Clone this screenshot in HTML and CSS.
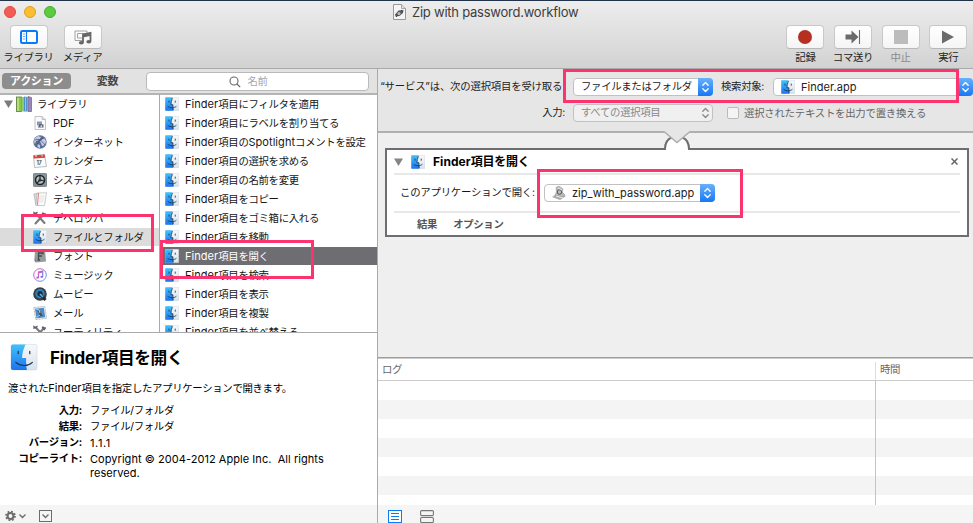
FILE: index.html
```html
<!DOCTYPE html>
<html lang="ja">
<head>
<meta charset="utf-8">
<title>Zip with password.workflow</title>
<link rel="stylesheet" href="styles.css">
</head>
<body>
<svg class="defs" width="0" height="0">
  <defs>
    <linearGradient id="gBlue" x1="0" y1="0" x2="0" y2="1"><stop offset="0" stop-color="#42c1fb"/><stop offset="1" stop-color="#1d74ee"/></linearGradient>
    <linearGradient id="gPale" x1="0" y1="0" x2="0" y2="1"><stop offset="0" stop-color="#f7f9fb"/><stop offset="1" stop-color="#d9e1ea"/></linearGradient>
    <linearGradient id="gNote" x1="0" y1="0" x2="1" y2="1"><stop offset="0" stop-color="#f257a5"/><stop offset=".5" stop-color="#a568e8"/><stop offset="1" stop-color="#35b5f2"/></linearGradient>
    <symbol id="finder" viewBox="0 0 28 28">
      <rect x=".5" y=".5" width="27" height="27" rx="1.5" fill="url(#gPale)" stroke="#b9c4d0" stroke-width=".7"/>
      <path d="M2 .5h13c-2 5-3 9-3.300 15h4c-.2 5 .1 8 .9 12H2Q.5 27.500.5 26V2Q.5.5 2 .5Z" fill="url(#gBlue)"/>
      <path d="M14.500 3c-1.600 4-2.400 8-2.700 12.500h4c-.2 4 0 7 .6 10M6 19c5 3.600 11.500 3.600 16.200 0M8 8v2.500M20.500 8v2.500" fill="none" stroke="#17344f" stroke-width="1.700" stroke-linecap="round"/>
    </symbol>
    <symbol id="finder-lg" viewBox="0 0 28 28">
      <rect x=".5" y=".5" width="27" height="26.500" rx="2" fill="url(#gPale)" stroke="#c7d0d9" stroke-width=".5"/>
      <path d="M2.500.5H15.500c-2.200 5-3.300 9-3.600 14h4.300c-.2 5 .1 9 .9 12.500H2.500Q.5 27 .5 25V2.500Q.5.5 2.500.5Z" fill="url(#gBlue)"/>
      <path d="M5.500 19c5 4.400 12.500 4.400 17.200 0M8 7.500v2.500M20 7.500v2.500" fill="none" stroke="#17344f" stroke-width="1.200" stroke-linecap="round"/>
    </symbol>
    <symbol id="updown" viewBox="0 0 15 18"><path d="M4.800 7.300 7.500 4.500l2.700 2.800M4.800 10.700l2.700 2.800 2.700-2.800" fill="none" stroke="currentColor" stroke-width="1.300" stroke-linecap="round" stroke-linejoin="round"/></symbol>
    <symbol id="tools" viewBox="0 0 14 14"><path d="M2.500 12.500 11 3M2.800 2.500 11.500 12" stroke="#777b80" stroke-width="2.100" stroke-linecap="round"/><path d="M1 4V1.500l1.500 1.200L4.500 1M9.500 1.500l1.500 1.700L13 3M9 2.300 12 5" fill="none" stroke="#5c6168" stroke-width="1.300"/></symbol>
  </defs>
</svg>
<div class="window">
  <header class="toolbar">
    <div class="lights"><i class="red"></i><i class="yellow"></i><i class="green"></i></div>
    <div class="title">
      <svg width="13" height="16" viewBox="0 0 13 16"><path d="M.5.500h8l4 4v11H.5Z" fill="#f4f4f4" stroke="#999"/><path d="M8.500.5v4h4" fill="#ddd" stroke="#999" stroke-width=".8"/><path d="M2 10.500 5.500 6.500l5-.5-.5 3-3.500 3-4 .5Z" fill="#59595b"/><circle cx="6" cy="9.500" r="1.500" fill="#bbb"/><path d="m3 13 2-2M8 6l2 2" stroke="#444"/></svg>
      <span>Zip with password.workflow</span>
    </div>
    <div class="tools left-tools">
      <div class="tool"><div class="btn"><svg width="18" height="14" viewBox="0 0 18 14"><rect x="1" y="1" width="16" height="12" rx="1.500" fill="#fff" stroke="#087cf5" stroke-width="2"/><path d="M6.500 1v12" stroke="#087cf5" stroke-width="1.200"/><path d="M3 4h2M3 6.500h2M3 9h2" stroke="#6bb0f8" stroke-width="1"/></svg></div><label>ライブラリ</label></div>
      <div class="tool"><div class="btn"><svg width="18" height="15" viewBox="0 0 18 15"><path d="M8 10.500H1V1h12v3M8 8H3.500V3.500h7" fill="none" stroke="#a2a2a2"/><path d="M9 12.500V4.500l7.500-1.700v8.500M9 6.500l7.500-1.700" fill="none" stroke="#666" stroke-width="1.800"/><ellipse cx="7.300" cy="12.700" rx="2.500" ry="1.800" fill="#666"/><ellipse cx="14.800" cy="11.700" rx="2.500" ry="1.800" fill="#666"/></svg></div><label>メディア</label></div>
    </div>
    <div class="tools right-tools">
      <div class="tool"><div class="btn"><svg width="16" height="16"><circle cx="8" cy="8" r="7" fill="#b53022"/></svg></div><label>記録</label></div>
      <div class="tool"><div class="btn"><svg width="16" height="14" viewBox="0 0 16 14"><path d="M.5 4.500h6V.500l7 6.500-7 6.500v-4h-6Z" fill="#6b6b6b"/><path d="M14.500 0v14" stroke="#6b6b6b" stroke-width="1.100"/></svg></div><label>コマ送り</label></div>
      <div class="tool off"><div class="btn"><svg width="14" height="14"><rect width="14" height="14" fill="#bcbcbc"/></svg></div><label>中止</label></div>
      <div class="tool"><div class="btn"><svg width="12" height="14"><path d="M0 .5 12 7 0 13.500Z" fill="#6b6b6b"/></svg></div><label>実行</label></div>
    </div>
  </header>
  <div class="main">
    <aside class="side">
      <div class="tabs">
        <span class="tab active">アクション</span><span class="tab">変数</span>
        <div class="search"><svg width="12" height="12" viewBox="0 0 12 12"><circle cx="5" cy="5" r="4" fill="none" stroke="#666" stroke-width="1.100"/><path d="m8 8 3.200 3.200" stroke="#666" stroke-width="1.200"/></svg><span>名前</span></div>
      </div>
      <div class="lists">
        <div class="library">
          <div class="row root"><svg class="tri" width="9" height="8"><path d="M0 .5h9L4.500 8Z" fill="#7b7b7b"/></svg><svg width="16" height="16" viewBox="0 0 16 16"><rect x=".4" y="1" width="5" height="14.500" fill="#8ec54d" stroke="#557c32" stroke-width=".8"/><path d="M2 1.500V15" stroke="#cde9a2" stroke-width="1.200"/><rect x="5.500" y="1" width="2.500" height="14.500" fill="#8fca6c"/><path d="m8 .5 3.500.5v14.500H8Z" fill="#4d91c5"/><path d="M9.500 1v14" stroke="#91c8ea"/><path d="m12 .5 3.500 1v14H12Z" fill="#9a86b8" stroke="#6c5e8d" stroke-width=".7"/></svg><span>ライブラリ</span></div>
          <div class="row"><svg class="ico" viewBox="0 0 14 14"><path d="M2 .500h7l3.500 3v10H2Z" fill="#fafafa" stroke="#aaa" stroke-width=".7"/><path d="M9 .5v3h3.500" fill="#ddd" stroke="#aaa" stroke-width=".6"/><rect x="4" y="5.500" width="5" height="4" fill="#849bc5"/><path d="M5 11.500 6.500 8l4 .5v3Z" fill="#596071"/><circle cx="8.300" cy="10.200" r="1" fill="#ddd"/></svg><span class="en">PDF</span></div>
          <div class="row"><svg class="ico" viewBox="0 0 14 14"><circle cx="7" cy="7" r="6.700" fill="#5c6f9b"/><path d="m2 3 3-2 3 1-2 3-3 1-1 3-1-2ZM7 6l4-3 2 3-1 4-3 1ZM4 9l3 1v3l-3-1Z" fill="#c3cce0"/><path d="M2 5c4-2 7 1 10 5M4 12c0-5 3-8 7-9" fill="none" stroke="#374361" stroke-width=".7"/></svg><span>インターネット</span></div>
          <div class="row"><svg class="ico" viewBox="0 0 14 14"><path d="m.5 1.500 11-1 2 12-12 1Z" fill="#fafafa" stroke="#a4a4a4" stroke-width=".7"/><path d="m.4 1.400 11.200-1 .5 3.400L.8 4.600Z" fill="#d94238"/><path d="M3 1v2M9 .5v2" stroke="#eee"/><text x="3.600" y="11" class="cal">17</text></svg><span>カレンダー</span></div>
          <div class="row"><svg class="ico" viewBox="0 0 14 14"><rect x=".4" y=".4" width="13.200" height="13.200" rx="1" fill="#87959a" stroke="#59656a" stroke-width=".7"/><circle cx="7" cy="7" r="4.500" fill="#b9c0c2" stroke="#20272a" stroke-width="1.600"/><path d="M7 7V3M7 7l4 1M7 7l-3 3" stroke="#20272a" stroke-width="1.200"/><circle cx="7" cy="7" r="1.600" fill="#30383b"/></svg><span>システム</span></div>
          <div class="row"><svg class="ico" viewBox="0 0 14 14"><path d="m.8 2 4-.8 1 12-3-.2Z" fill="#d8dbdc" stroke="#999" stroke-width=".5"/><path d="m4 1 9.500-.2-2 12.700H3Z" fill="#fcfcfc" stroke="#aaa" stroke-width=".6"/><path d="M5.500 1 4.500 13" stroke="#d75752" stroke-width=".8"/><path d="M6.500 4h5M6.300 6h5M6 8h5M6 10h4" stroke="#ccc" stroke-width=".6"/></svg><span>テキスト</span></div>
          <div class="row"><svg class="ico"><use href="#tools"/></svg><span>デベロッパ</span></div>
          <div class="row sel"><svg class="ico"><use href="#finder"/></svg><span>ファイルとフォルダ</span></div>
          <div class="row"><svg class="ico" viewBox="0 0 14 14"><path d="m2 1 10-.5 1 12-10 1Z" fill="#969c9a"/><path d="m2 1 1 12.500L1.500 12Z" fill="#636967"/><path d="M5.500 11V4H10v1.500M5.500 7H9M4.500 11h2.500" stroke="#424a48" stroke-width="1.300" fill="none"/></svg><span>フォント</span></div>
          <div class="row"><svg class="ico" viewBox="0 0 14 14"><circle cx="7" cy="7" r="6.300" fill="#fff" stroke="url(#gNote)" stroke-width="1"/><path d="M5.500 9.500V4l4.200-1v5.500M5.500 5l4.200-1" stroke="url(#gNote)" stroke-width="1.200" fill="none"/><ellipse cx="4.600" cy="9.700" rx="1.400" ry="1.100" fill="#e45bb1"/><ellipse cx="8.800" cy="8.800" rx="1.400" ry="1.100" fill="#8368e6"/></svg><span>ミュージック</span></div>
          <div class="row"><svg class="ico" viewBox="0 0 14 14"><circle cx="7" cy="7" r="6.800" fill="#3b4048"/><circle cx="7" cy="6.700" r="3.700" fill="#163247" stroke="#2f83bd" stroke-width="2"/><path d="m7.500 7.500 5 5.500" stroke="#252a30" stroke-width="3"/><path d="m7 7 3 3" stroke="#68bce7" stroke-width="1.400"/></svg><span>ムービー</span></div>
          <div class="row"><svg class="ico" viewBox="0 0 14 14"><path d="m.7 1.500 11-1.200 2 12-11 1.300Z" fill="#e9eef2" stroke="#9baab7" stroke-width=".8" stroke-dasharray="1 .5"/><path d="m2 2.700 8.800-.9 1.400 9.400-8.700 1Z" fill="#4d8bc1"/><path d="m4 4 3 1.200 3 5-2-.7-1.500 1.500L6 7Z" fill="#54483d"/><path d="m3 3 3 1 1 3M4 11l3-2" fill="none" stroke="#a9cbe8"/></svg><span>メール</span></div>
          <div class="row"><svg class="ico"><use href="#tools"/></svg><span>ユーティリティ</span></div>
        </div>
        <div class="actions">
          <div class="row"><svg class="ico"><use href="#finder"/></svg><span><b class="en">Finder</b>項目にフィルタを適用</span></div>
          <div class="row"><svg class="ico"><use href="#finder"/></svg><span><b class="en">Finder</b>項目にラベルを割り当てる</span></div>
          <div class="row"><svg class="ico"><use href="#finder"/></svg><span><b class="en">Finder</b>項目の<b class="en">Spotlight</b>コメントを設定</span></div>
          <div class="row"><svg class="ico"><use href="#finder"/></svg><span><b class="en">Finder</b>項目の選択を求める</span></div>
          <div class="row"><svg class="ico"><use href="#finder"/></svg><span><b class="en">Finder</b>項目の名前を変更</span></div>
          <div class="row"><svg class="ico"><use href="#finder"/></svg><span><b class="en">Finder</b>項目をコピー</span></div>
          <div class="row"><svg class="ico"><use href="#finder"/></svg><span><b class="en">Finder</b>項目をゴミ箱に入れる</span></div>
          <div class="row"><svg class="ico"><use href="#finder"/></svg><span><b class="en">Finder</b>項目を移動</span></div>
          <div class="row sel"><svg class="ico"><use href="#finder"/></svg><span><b class="en">Finder</b>項目を開く</span></div>
          <div class="row"><svg class="ico"><use href="#finder"/></svg><span><b class="en">Finder</b>項目を検索</span></div>
          <div class="row"><svg class="ico"><use href="#finder"/></svg><span><b class="en">Finder</b>項目を表示</span></div>
          <div class="row"><svg class="ico"><use href="#finder"/></svg><span><b class="en">Finder</b>項目を複製</span></div>
          <div class="row"><svg class="ico"><use href="#finder"/></svg><span><b class="en">Finder</b>項目を並べ替える</span></div>
        </div>
      </div>
      <section class="info">
        <div class="info-head"><svg width="28" height="27"><use href="#finder-lg"/></svg><h1><span class="en">Finder</span>項目を開く</h1></div>
        <p>渡された<b class="en">Finder</b>項目を指定したアプリケーションで開きます。</p>
        <dl>
          <dt>入力:</dt><dd>ファイル/フォルダ</dd>
          <dt>結果:</dt><dd>ファイル/フォルダ</dd>
          <dt>バージョン:</dt><dd class="en ver">1.1.1</dd>
          <dt>コピーライト:</dt><dd class="en">Copyright © 2004-2012 Apple Inc.&nbsp; All rights<br>reserved.</dd>
        </dl>
      </section>
      <footer class="foot side-foot">
        <svg width="22" height="12" viewBox="0 0 22 12"><circle cx="5.500" cy="6" r="2.900" fill="none" stroke="#6c6c6c" stroke-width="2"/><circle cx="5.500" cy="6" r="4.500" fill="none" stroke="#6c6c6c" stroke-width="1.700" stroke-dasharray="1.770 1.765"/><path d="m14.500 4.500 3 3 3-3" fill="none" stroke="#6c6c6c" stroke-width="1.400"/></svg>
        <svg width="13" height="12" viewBox="0 0 13 12"><rect x=".5" y=".5" width="12" height="11" fill="none" stroke="#6c6c6c"/><path d="m3.500 4.500 3 3 3-3" fill="none" stroke="#6c6c6c" stroke-width="1.300"/></svg>
      </footer>
    </aside>
    <section class="work">
      <div class="params">
        <div class="line">
          <span class="lab service">“サービス”は、次の選択項目を受け取る:</span>
          <div class="popup p-files"><span>ファイルまたはフォルダ</span><svg class="cap" width="15" height="18"><use href="#updown"/></svg></div>
          <span class="target">検索対象:</span>
          <div class="popup p-finder"><svg class="ico"><use href="#finder"/></svg><span class="en">Finder.app</span><svg class="cap" width="15" height="18"><use href="#updown"/></svg></div>
        </div>
        <div class="line second">
          <span class="lab">入力:</span>
          <div class="popup p-all"><span>すべての選択項目</span><svg class="cap" width="15" height="18"><use href="#updown"/></svg></div>
          <i class="check"></i><span class="replace">選択されたテキストを出力で置き換える</span>
        </div>
      </div>
      <div class="canvas">
        <div class="action">
          <div class="a-head"><svg width="9" height="8"><path d="M0 .5h9L4.500 8Z" fill="#858585"/></svg><svg class="ico"><use href="#finder"/></svg><h2><span class="en">Finder</span>項目を開く</h2><svg class="close" width="7" height="7"><path d="m.5.500 6 6M6.500.5l-6 6" stroke="#666" stroke-width="1.500"/></svg></div>
          <div class="a-body"><span class="open-label">このアプリケーションで開く:</span><div class="popup p-zip"><svg class="ico" viewBox="0 0 14 14"><path d="m0 11 6-4 8 3-6 4Z" fill="#a9a9a9"/><path d="M4 1.500 7 0l4 3-1 3 3 3-3 2-7-2 1.500-3Z" fill="#bbb" stroke="#999" stroke-width=".6"/><circle cx="7.500" cy="6" r="2.300" fill="#bbb" stroke="#555"/><path d="m6 2 4 2M4 10l7 2" stroke="#eee"/></svg><span class="en">zip_with_password.app</span><svg class="cap" width="15" height="18"><use href="#updown"/></svg></div></div>
          <div class="a-foot"><span>結果</span><span>オプション</span></div>
        </div>
        <svg class="joint" width="30" height="22" viewBox="0 0 30 22"><path d="M2 20.500C2 12 7 7.500 15 7.500S28 12 28 20.500V22H2Z" fill="#fff"/><path d="M0 18h3C3 12 6 8 9.500 6.500M30 18h-3C27 12 24 8 20.500 6.500" fill="none" stroke="#6e6d72" stroke-width="2"/><path d="M2 0h26v1.500h-.5L15 11.500 2.500 1.500H2Z" fill="#e6e6e6"/><path d="M0 1h2.500L15 11.500 27.500 1H30" fill="none" stroke="#adadad" stroke-width="1.400"/></svg>
      </div>
      <div class="log">
        <div class="log-head"><span>ログ</span><span>時間</span></div>
        <div class="log-body"><div></div><div></div></div>
      </div>
      <footer class="foot work-foot">
        <svg width="14" height="13" viewBox="0 0 14 13"><rect x=".5" y=".5" width="13" height="12" fill="#fff" stroke="#087cf5"/><path d="M3 3.500h8M3 6.500h8M3 9.500h8" stroke="#087cf5"/></svg>
        <svg width="14" height="13" viewBox="0 0 14 13"><rect x=".6" y=".6" width="12.800" height="5" rx="1" fill="none" stroke="#777" stroke-width="1.100"/><rect x=".6" y="7.500" width="12.800" height="5" rx="1" fill="none" stroke="#777" stroke-width="1.100"/></svg>
      </footer>
    </section>
  </div>
  <i class="mark m-service"></i><i class="mark m-zip"></i><i class="mark m-folder"></i><i class="mark m-open"></i>
</div>
</body>
</html>
```
FILE: styles.css
```css
* { box-sizing: border-box; }
body { margin: 0; font: 10.4px/14px "Inter", "Noto Sans CJK JP", sans-serif; letter-spacing: -.32px; color: #161616; overflow: hidden; }
.defs { position: absolute; }
svg { display: block; flex: none; }
span, label, dt { white-space: nowrap; }
.en { font-size: 11px; font-weight: inherit; letter-spacing: .05px; }
b.en { font-weight: 400; }
.window { position: relative; width: 973px; height: 523px; display: flex; flex-direction: column; border-top: 1px solid #21334a; background: #fff; overflow: hidden; }

.toolbar { position: relative; flex: none; height: 68px; background: linear-gradient(#ededed, #d2d2d2); border-bottom: 1px solid #aaa; display: flex; justify-content: space-between; align-items: flex-end; padding: 0 4px 3px; }
.lights { position: absolute; left: 4px; top: 5px; display: flex; gap: 8px; }
.lights i { width: 12px; height: 12px; border-radius: 50%; border: 1px solid; }
.lights .red { background: #f25c54; border-color: #de4a43; }
.lights .yellow { background: #fabe30; border-color: #dfa023; }
.lights .green { background: #5dcb3f; border-color: #46ad2d; }
.title { position: absolute; left: 393px; top: 3px; display: flex; align-items: center; gap: 6px; font-size: 13px; line-height: 16px; letter-spacing: -.24px; color: #3d3d3d; }
.tools { display: flex; }
.tool { display: flex; flex-direction: column; align-items: center; gap: 2px; width: 48px; color: #222; }
.left-tools .tool { width: 51px; }
.left-tools { gap: 3px; margin-left: -1px; }
.right-tools { margin-right: -3px; }
.right-tools .tool { width: 47.6px; }
.btn { width: 38px; height: 24px; background: linear-gradient(#fff, #f5f5f5); border: 1px solid #c9c9c9; border-bottom-color: #b8b8b8; border-radius: 4px; display: flex; align-items: center; justify-content: center; }
.off { color: #8b8b8b; }

.main { flex: 1; min-height: 0; display: flex; }
.side { width: 378px; flex: none; border-right: 1px solid #aaa; display: flex; flex-direction: column; }
.tabs { height: 26px; flex: none; background: #e2e2e2; border-bottom: 2px solid #b4b4b4; display: flex; align-items: center; padding: 0 8px 0 2px; font-weight: 700; font-size: 11px; color: #444; }
.tab { width: 73px; text-align: center; line-height: 16px; }
.tab.active { width: 69px; background: #8d8d8d; color: #fff; border-radius: 4px; }
.search { width: 223px; height: 19px; margin-left: auto; background: #fff; border: 1px solid #b9b9b9; border-radius: 4px; display: flex; align-items: center; justify-content: center; gap: 6px; font-size: 10.4px; font-weight: 400; color: #a8a8a8; padding: 1px 36px 0 18px; }
.lists { height: 238px; flex: none; display: flex; border-bottom: 1px solid #aaa; overflow: hidden; }
.library { width: 160px; border-right: 1px solid #aaa; }
.actions { flex: 1; }
.row { height: 18px; margin-bottom: 1px; display: flex; align-items: center; padding-left: 33px; gap: 6px; }
.library .row span:not(.en) { padding-top: 1px; }
.root { padding-left: 4px; gap: 3px; }
.root span { margin-left: 2px; }
.actions .row { padding-left: 5px; gap: 6px; }
.ico { width: 14px; height: 14px; }
.cal { font: 600 5.5px "Inter", sans-serif; fill: #444; }
.library .sel { background: #dcdcdc; }
.actions .sel { background: #6e6d72; color: #fff; }

.info { flex: 1; padding: 11px 8px 0; color: #000; }
.info-head { display: flex; align-items: center; gap: 12px; padding-left: 2px; }
h1 { margin: 0; font-size: 16.7px; line-height: 26px; letter-spacing: -.4px; font-weight: 700; }
h1 .en { font-size: 17px; letter-spacing: -.2px; }
.info p { margin: 10px 0 8px; }
dl { margin: 0; display: grid; grid-template-columns: 74px 1fr; column-gap: 8px; row-gap: 2px; }
dt { text-align: right; font-weight: 700; }
dd { margin: 0; }
.ver { letter-spacing: .6px; }
.foot { flex: none; height: 18px; background: #f5f5f5; display: flex; align-items: center; padding-top: 4px; }
.side-foot { padding-left: 5px; gap: 12px; }
.work-foot { padding-left: 10px; gap: 18px; }

.work { flex: 1; min-width: 0; display: flex; flex-direction: column; }
.params { height: 64px; flex: none; background: #e6e6e6; border-bottom: 2px solid #b0b0b0; padding-top: 9px; }
.line { display: flex; align-items: center; height: 18px; }
.second { margin-top: 8px; color: #666; }
.lab { width: 187px; text-align: right; color: #222; margin-right: 8px; }
.service { letter-spacing: -.2px; }
.replace { letter-spacing: -.24px; padding-top: 1px; }
.popup { height: 18px; flex: none; background: #fff; border: 1px solid #c1c1c1; border-radius: 4px; display: flex; align-items: center; padding-left: 7px; color: #222; }
.popup .cap { margin: -1px -1px -1px auto; color: #fff; background: linear-gradient(#69b0fa, #1678f5); border-radius: 0 4px 4px 0; }
.popup .ico { margin-right: 6px; }
.p-files { width: 140px; }
.target { width: 44px; margin: 0 8px; color: #222; }
.p-finder { width: 200px; }
.p-all { width: 140px; background: #f0f0f0; color: #888; }
.p-all .cap { background: none; color: #888; }
.check { width: 12px; height: 12px; margin: 0 5px 0 14px; border: 1px solid #bbb; border-radius: 2px; background: #f4f4f4; }
.canvas { position: relative; height: 224px; flex: none; background: #efefef; padding: 15px 4px 0 7px; }
.action { height: 89px; border: 2px solid #6e6d72; background: #fff; padding: 0 7px; }
.a-head { height: 25px; display: flex; align-items: center; border-bottom: 2px solid #e8e8e8; }
.a-head .ico { margin: 0 8px 0 8px; }
h2 { margin: 0; padding-top: 1px; font-size: 12px; letter-spacing: -.2px; color: #000; }
h2 .en { font-size: 12px; }
.close { margin: 0 2px 0 auto; }
.a-body { height: 38px; display: flex; align-items: center; border-bottom: 2px solid #e8e8e8; }
.open-label { width: 136px; margin: 0 8px 0 6px; letter-spacing: -.22px; }
.p-zip { width: 171px; }
.a-foot { display: flex; gap: 16px; padding: 5px 0 0 23px; font-weight: 700; color: #555; }
.joint { position: absolute; left: 284px; top: -2px; }
.log { flex: 1; display: flex; flex-direction: column; border-top: 1px solid #9e9e9e; box-shadow: inset 0 1px #ccc; }
.log-head { height: 23px; flex: none; padding-top: 4px; display: flex; border-bottom: 1px solid #ccc; color: #666; }
.log-head span { width: 497px; padding-left: 4px; line-height: 16px; }
.log-head span + span { width: 98px; border-left: 1px solid #ddd; }
.log-body { flex: 1; display: flex; background: repeating-linear-gradient(#fff 0 19px, #f4f4f4 19px 38px); }
.log-body div:first-child { width: 498px; border-right: 1px solid #c4c4c4; }

.mark { position: absolute; border: 3px solid #fb3470; }
.m-service { left: 563px; top: 68px; width: 396px; height: 34px; }
.m-zip { left: 537px; top: 168px; width: 206px; height: 49px; }
.m-folder { left: 21px; top: 213px; width: 133px; height: 38px; }
.m-open { left: 160px; top: 239px; width: 154px; height: 39px; }
```
